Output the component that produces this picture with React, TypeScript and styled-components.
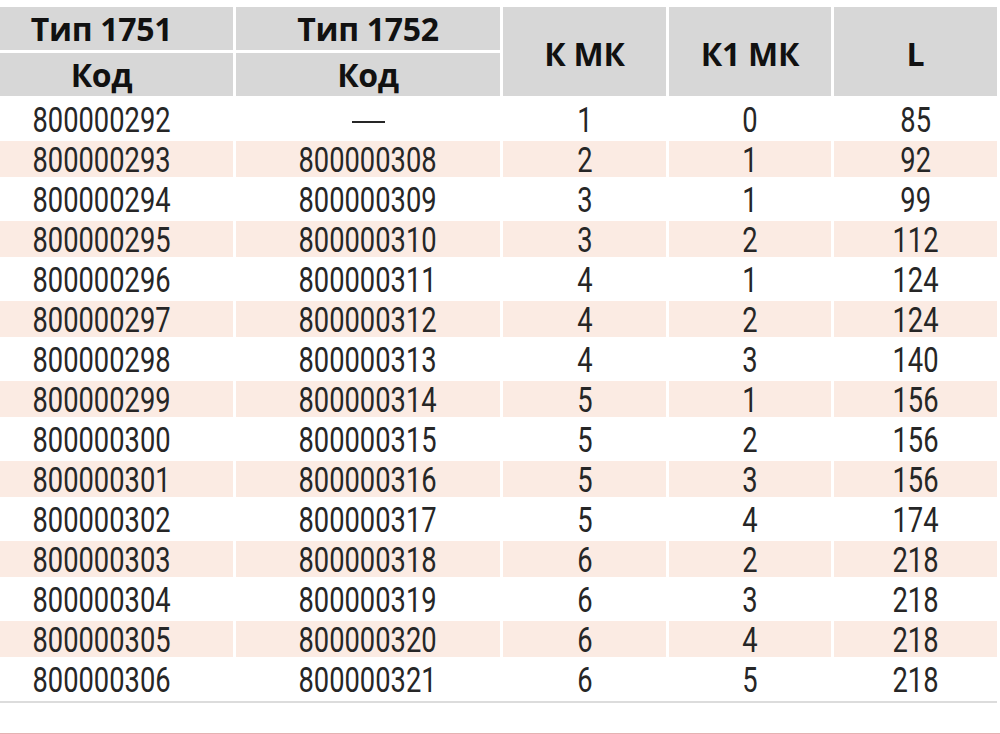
import React from "react";
import styled, { createGlobalStyle } from "styled-components";

const Global = createGlobalStyle`
  html, body { margin: 0; padding: 0; background: #ffffff; }
  body { width: 1000px; height: 734px; overflow: hidden; }
`;

const Page = styled.div`
  width: 1000px;
  height: 734px;
  box-sizing: border-box;
  padding-top: 7px;
  border-bottom: 1px solid #e4b3b3;
  display: flex;
  flex-direction: column;
`;

const Grid = styled.div`
  display: grid;
  grid-template-columns: 233px 264px 163px 162px 163px;
  column-gap: 3px;
  width: 997px;
`;

const Head = styled(Grid)`
  grid-template-rows: 43px 43px;
  row-gap: 3px;
`;

const HeadCell = styled.div<{ $span?: boolean; $shift?: boolean }>`
  background: #d7d7d7;
  display: flex;
  align-items: center;
  justify-content: center;
  font-family: "Open Sans", "DejaVu Sans", sans-serif;
  font-weight: 700;
  font-size: 32px;
  letter-spacing: -0.3px;
  color: #111111;
  padding-right: ${(p) => (p.$shift ? "30px" : "0")};
  grid-row: ${(p) => (p.$span ? "span 2" : "auto")};
  padding-top: ${(p) => (p.$span ? "4px" : "0")};
`;

const Body = styled(Grid)`
  grid-auto-rows: 36px;
  row-gap: 4px;
  margin-top: 5px;
`;

const Cell = styled.div<{ $alt: boolean; $shift?: boolean }>`
  background: ${(p) => (p.$alt ? "#fbebe3" : "#ffffff")};
  display: flex;
  align-items: center;
  justify-content: center;
  padding-right: ${(p) => (p.$shift ? "30px" : "0")};
  padding-top: 4px;
  box-sizing: border-box;
`;

const Num = styled.span`
  display: inline-block;
  font-family: Roboto, "Liberation Sans", sans-serif;
  font-weight: 400;
  font-size: 35px;
  line-height: 32px;
  color: #262626;
  transform: scaleX(0.78);
  white-space: nowrap;
`;

const Dash = styled.span`
  display: inline-block;
  width: 33px;
  height: 2px;
  margin-top: 2px;
  background: #262626;
`;

const BottomLine = styled.div`
  width: 997px;
  height: 2px;
  margin-top: 4px;
  background: #dcdcdc;
`;

const rows: [string, string, number, number, number][] = [
  ["800000292", "—", 1, 0, 85],
  ["800000293", "800000308", 2, 1, 92],
  ["800000294", "800000309", 3, 1, 99],
  ["800000295", "800000310", 3, 2, 112],
  ["800000296", "800000311", 4, 1, 124],
  ["800000297", "800000312", 4, 2, 124],
  ["800000298", "800000313", 4, 3, 140],
  ["800000299", "800000314", 5, 1, 156],
  ["800000300", "800000315", 5, 2, 156],
  ["800000301", "800000316", 5, 3, 156],
  ["800000302", "800000317", 5, 4, 174],
  ["800000303", "800000318", 6, 2, 218],
  ["800000304", "800000319", 6, 3, 218],
  ["800000305", "800000320", 6, 4, 218],
  ["800000306", "800000321", 6, 5, 218],
];

export default function App() {
  return (
    <>
      <Global />
      <Page>
        <Head>
          <HeadCell $shift>Тип 1751</HeadCell>
          <HeadCell>Тип 1752</HeadCell>
          <HeadCell $span>К МК</HeadCell>
          <HeadCell $span>К1 МК</HeadCell>
          <HeadCell $span>L</HeadCell>
          <HeadCell $shift>Код</HeadCell>
          <HeadCell>Код</HeadCell>
        </Head>
        <Body>
          {rows.map((r, i) => {
            const alt = i % 2 === 1;
            return (
              <React.Fragment key={i}>
                <Cell $alt={alt} $shift>
                  <Num>{r[0]}</Num>
                </Cell>
                <Cell $alt={alt}>
                  {r[1] === "—" ? <Dash role="img" aria-label="—" /> : <Num>{r[1]}</Num>}
                </Cell>
                <Cell $alt={alt}>
                  <Num>{r[2]}</Num>
                </Cell>
                <Cell $alt={alt}>
                  <Num>{r[3]}</Num>
                </Cell>
                <Cell $alt={alt}>
                  <Num>{r[4]}</Num>
                </Cell>
              </React.Fragment>
            );
          })}
        </Body>
        <BottomLine />
      </Page>
    </>
  );
}
